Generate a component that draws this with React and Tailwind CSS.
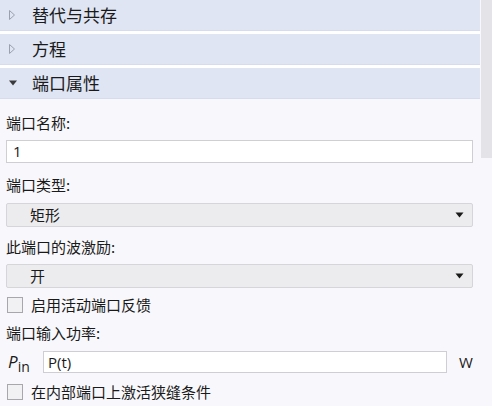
const cjk = { fontFamily: '"Noto Sans CJK SC", "Noto Sans", sans-serif' };
const latin = { fontFamily: '"Open Sans", sans-serif' };

const Header = ({ title, open }) => (
  <div className="h-[31px] flex items-center bg-[#dfe5f3] border-b border-[#d4dcee]">
    <div className="w-[32px] flex justify-center pl-[2px]">
      {open ? (
        <svg width="10" height="6" viewBox="0 0 10 6" className="mr-[8px]">
          <path d="M1 0.5 L9 0.5 L5 5.5 Z" fill="#3a3a3a" />
        </svg>
      ) : (
        <svg width="6" height="10" viewBox="0 0 6 10" className="mr-[10px]">
          <path d="M0.5 0.5 L5.5 5 L0.5 9.5 Z" fill="none" stroke="#9aa0ad" strokeWidth="1" />
        </svg>
      )}
    </div>
    <span className="text-[17px] text-[#1a1a1a]">{title}</span>
  </div>
);

const Label = ({ children }) => (
  <div className="px-[6px] text-[15px] text-[#1a1a1a] h-[20px] leading-[20px]">{children}</div>
);

const Select = ({ value }) => (
  <div className="h-[24px] ml-[6px] mr-[7px] flex items-center justify-between bg-[#ececef] border border-[#d6d6da] rounded-[2px] pl-[23px] pr-[8px]">
    <span className="text-[15px] text-[#1a1a1a]">{value}</span>
    <svg width="9" height="6" viewBox="0 0 9 6">
      <path d="M0.5 0.5 L8.5 0.5 L4.5 5.5 Z" fill="#1a1a1a" />
    </svg>
  </div>
);

const Check = ({ label }) => (
  <div className="flex items-center h-[20px] pl-[7px] gap-[8px]">
    <div className="w-[16px] h-[16px] border border-[#a8a8ac] bg-[#f1f1f3]" />
    <span className="text-[15px] text-[#1a1a1a]">{label}</span>
  </div>
);

export default function App() {
  return (
    <div className="w-[492px] h-[406px] overflow-hidden flex bg-[#f8f8fc]" style={cjk}>
      <div className="flex-1 flex flex-col">
        <Header title="替代与共存" />
        <div className="h-[3px] bg-white" />
        <Header title="方程" />
        <div className="h-[3px] bg-white" />
        <Header title="端口属性" open />
        <div className="h-[14px]" />
        <Label>端口名称:</Label>
        <div className="h-[7px]" />
        <div className="h-[23px] ml-[6px] mr-[7px] bg-white border border-[#cfcfd3] flex items-center px-[6px] text-[15px] text-[#1a1a1a]" style={latin}>1</div>
        <div className="h-[12px]" />
        <Label>端口类型:</Label>
        <div className="h-[8px]" />
        <Select value="矩形" />
        <div className="h-[10px]" />
        <Label>此端口的波激励:</Label>
        <div className="h-[7px]" />
        <Select value="开" />
        <div className="h-[7px]" />
        <Check label="启用活动端口反馈" />
        <div className="h-[8px]" />
        <Label>端口输入功率:</Label>
        <div className="h-[8px]" />
        <div className="flex items-center h-[22px] pl-[8px]">
          <span className="w-[35px] text-[#1a1a1a]" style={latin}>
            <i className="text-[17px]">P</i>
            <span className="text-[14px] relative top-[4px]">in</span>
          </span>
          <div className="w-[404px] h-[22px] bg-white border border-[#cfcfd3] flex items-center px-[4px] text-[15px] text-[#1a1a1a]" style={latin}>P(t)</div>
          <span className="ml-[12px] text-[15px] text-[#1a1a1a]" style={latin}>W</span>
        </div>
        <div className="h-[9px]" />
        <Check label="在内部端口上激活狭缝条件" />
      </div>
      <div className="w-[12px] flex flex-col bg-[#f8f8fc]">
        <div className="h-[158px] bg-[#e4e4e8] ml-[1px]" />
      </div>
    </div>
  );
}
